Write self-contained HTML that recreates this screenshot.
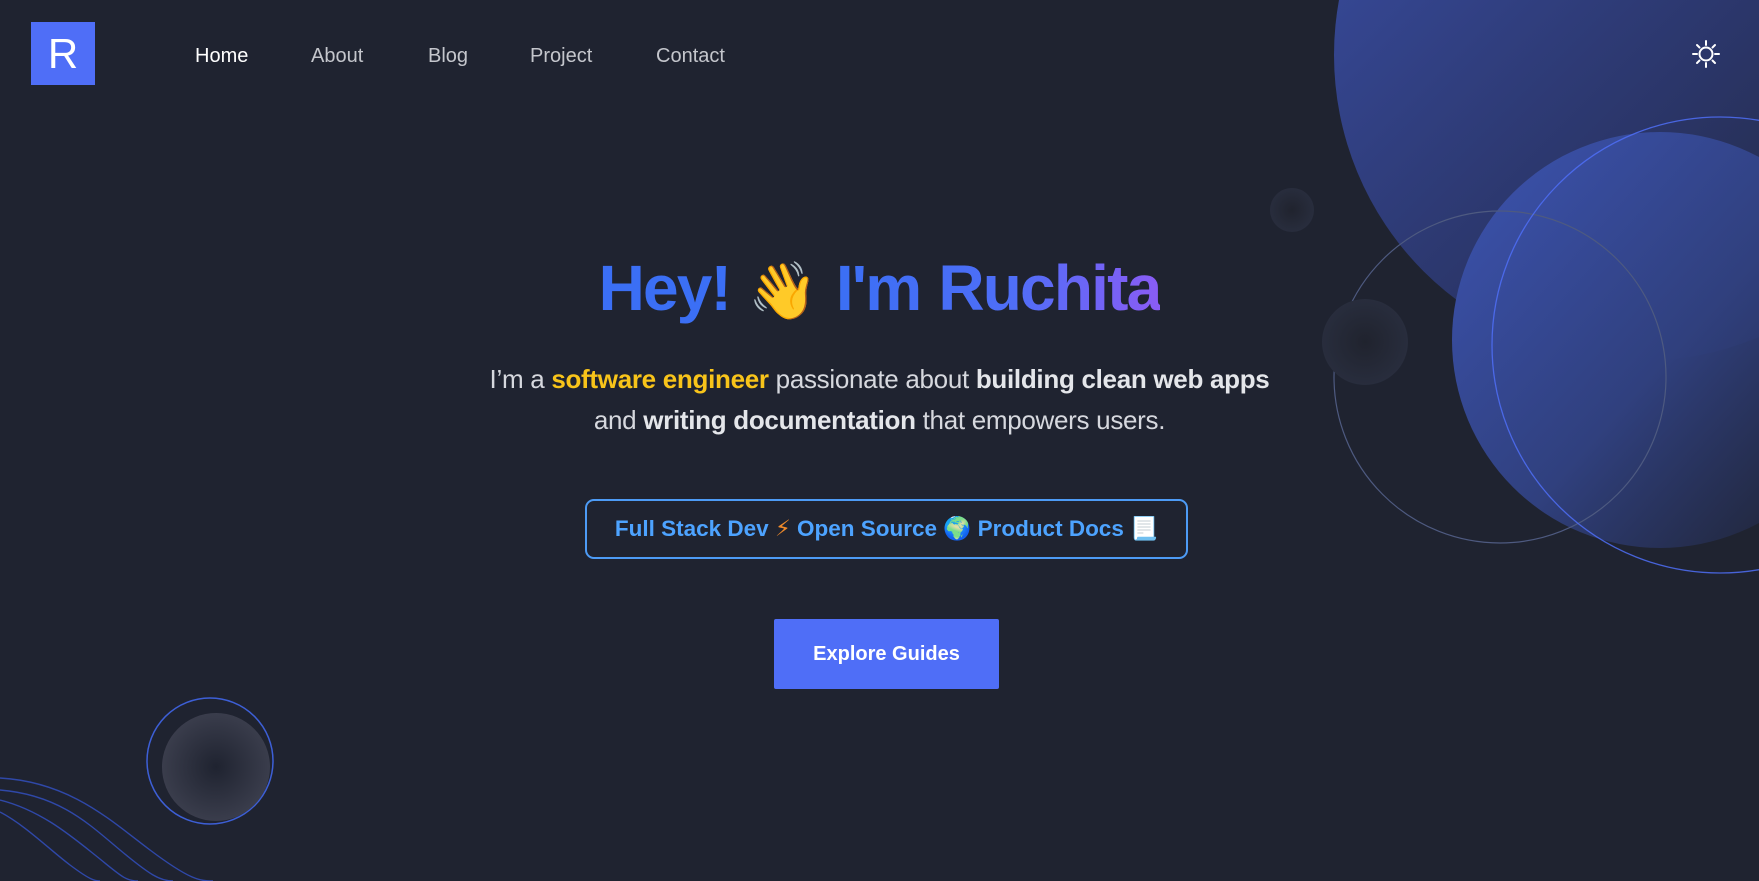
<!DOCTYPE html>
<html><head><meta charset="utf-8"><style>
*{margin:0;padding:0;box-sizing:border-box}
body{width:1759px;height:881px;background:#1f2330;overflow:hidden;position:relative;font-family:"Liberation Sans","DejaVu Sans",sans-serif}
.abs{position:absolute}
.logo{left:31px;top:22px;width:64px;height:63px;background:#4f6ef7;color:#fff;font-size:42px;font-weight:normal;text-align:center;line-height:63px}
.nav a{position:absolute;top:45px;font-size:20px;color:#c4c6cc;text-decoration:none}
h1{position:absolute;left:0;width:1759px;top:251px;text-align:center;font-size:64px;font-weight:800;letter-spacing:-1.8px;word-spacing:2px}
.b{color:#3b6ff5}
.g{background:linear-gradient(90deg,#3b6ff5,#4f6ef7 55%,#8a5cf5);-webkit-background-clip:text;background-clip:text;color:transparent}
p.lead{position:absolute;left:0;width:1759px;top:359px;text-align:center;font-size:26px;line-height:41px;color:#d6d8de;letter-spacing:-0.3px}
p.lead b{color:#e4e6ea}
p.lead .y{color:#f8c41a}
.box{left:585px;top:499px;width:603px;height:60px;border:2px solid #4d9bf5;border-radius:9px;color:#4da3ff;font-size:22.5px;font-weight:bold;text-align:center;line-height:56px}
.btn{left:774px;top:619px;width:225px;height:70px;background:#4f6ef7;color:#fff;font-size:20px;font-weight:bold;text-align:center;line-height:70px;border-radius:2px}
</style></head><body>
<svg class="abs" style="left:0;top:0" width="1759" height="881">
<defs>
<linearGradient id="a" x1="0" y1="0" x2="1" y2="1"><stop offset="0" stop-color="#3b50aa"/><stop offset="0.55" stop-color="#2b366a"/><stop offset="1" stop-color="#1f2330"/></linearGradient>
<linearGradient id="b" x1="0.1" y1="0.1" x2="1" y2="0.9"><stop offset="0" stop-color="#3a50a8"/><stop offset="0.5" stop-color="#30407e"/><stop offset="1" stop-color="#2c3a74" stop-opacity="0"/></linearGradient>
<radialGradient id="c"><stop offset="0" stop-color="#1f2330"/><stop offset="1" stop-color="#3a3d4c"/></radialGradient>
<radialGradient id="d"><stop offset="0" stop-color="#20232e"/><stop offset="1" stop-color="#282d3d"/></radialGradient>
</defs>
<circle cx="1640" cy="55" r="306" fill="url(#a)"/>
<circle cx="1660" cy="340" r="208" fill="url(#b)"/>
<circle cx="1500" cy="377" r="166" fill="none" stroke="#4e5a80" stroke-width="1.2"/>
<circle cx="1720" cy="345" r="228" fill="none" stroke="#4f6ef7" stroke-width="1.3" opacity="0.85"/>
<circle cx="1292" cy="210" r="22" fill="url(#d)"/>
<circle cx="1365" cy="342" r="43" fill="url(#d)"/>
<circle cx="210" cy="761" r="63" fill="none" stroke="#3d5fd6" stroke-width="1.5"/>
<circle cx="216" cy="767" r="54" fill="url(#c)"/>
<g fill="none" stroke="#2f48a8" stroke-width="1.4">
<path d="M0 778 C70 782 110 820 150 850 S200 881 213 881"/>
<path d="M0 790 C60 795 90 825 120 850 S160 881 173 881"/>
<path d="M0 800 C40 810 70 835 95 855 S125 881 138 881"/>
<path d="M0 812 C25 825 50 850 70 865 S95 881 100 881"/>
</g>
<g stroke="#fff" stroke-width="2" fill="none" stroke-linecap="round">
<circle cx="1706" cy="54" r="6.5"/>
<path d="M1706 41v4M1706 63v4M1693 54h4M1715 54h4M1697 45l2.5 2.5M1712.5 60.5l2.5 2.5M1697 63l2.5-2.5M1712.5 47.5l2.5-2.5"/>
</g>
</svg>
<div class="abs logo">R</div>
<div class="nav">
<a style="left:195px;color:#fff">Home</a><a style="left:311px">About</a><a style="left:428px">Blog</a><a style="left:530px">Project</a><a style="left:656px">Contact</a>
</div>
<h1><span class="b">Hey!</span> <span style="font-size:56px;letter-spacing:0">👋</span> <span class="g">I'm Ruchita</span></h1>
<p class="lead">I’m a <b class="y">software engineer</b> passionate about <b>building clean web apps</b><br>and <b>writing documentation</b> that empowers users.</p>
<div class="abs box">Full Stack Dev <span style="color:#f08a2a">⚡</span> Open Source 🌍 Product Docs 📃</div>
<div class="abs btn">Explore Guides</div>
</body></html>
